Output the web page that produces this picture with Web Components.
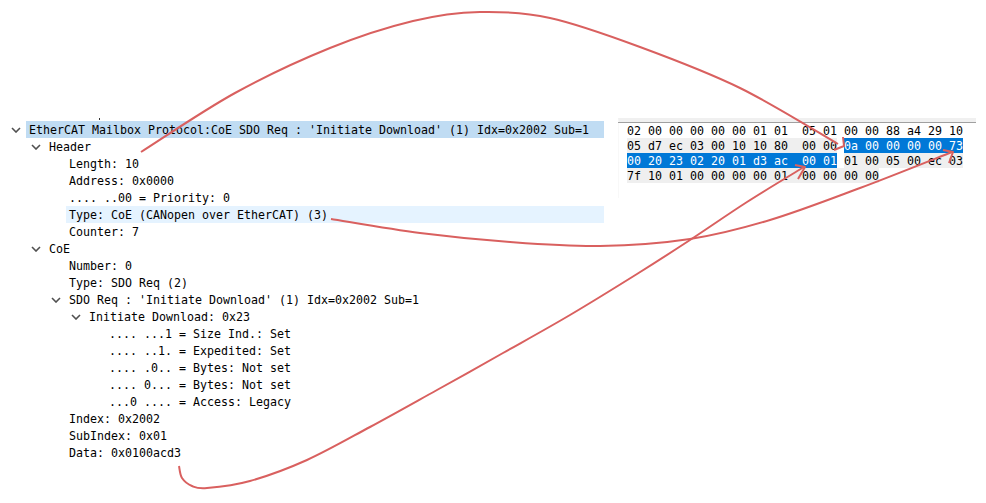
<!DOCTYPE html>
<html>
<head>
<meta charset="utf-8">
<title>EtherCAT Mailbox</title>
<style>
  html, body { margin: 0; background: #fff; }
  body {
    width: 986px;
    height: 503px;
    overflow: hidden;
    font: 11.63px "DejaVu Sans Mono", "Liberation Mono", monospace;
    color: #000;
  }
</style>
</head>
<body>
<capture-page>
  <packet-tree slot="tree">
    <tree-row depth="0" open selected>EtherCAT Mailbox Protocol:CoE SDO Req : 'Initiate Download' (1) Idx=0x2002 Sub=1</tree-row>
    <tree-row depth="1" open>Header</tree-row>
    <tree-row depth="2">Length: 10</tree-row>
    <tree-row depth="2">Address: 0x0000</tree-row>
    <tree-row depth="2">.... ..00 = Priority: 0</tree-row>
    <tree-row depth="2" hover>Type: CoE (CANopen over EtherCAT) (3)</tree-row>
    <tree-row depth="2">Counter: 7</tree-row>
    <tree-row depth="1" open>CoE</tree-row>
    <tree-row depth="2">Number: 0</tree-row>
    <tree-row depth="2">Type: SDO Req (2)</tree-row>
    <tree-row depth="2" open>SDO Req : 'Initiate Download' (1) Idx=0x2002 Sub=1</tree-row>
    <tree-row depth="3" open>Initiate Download: 0x23</tree-row>
    <tree-row depth="4">.... ...1 = Size Ind.: Set</tree-row>
    <tree-row depth="4">.... ..1. = Expedited: Set</tree-row>
    <tree-row depth="4">.... .0.. = Bytes: Not set</tree-row>
    <tree-row depth="4">.... 0... = Bytes: Not set</tree-row>
    <tree-row depth="4">...0 .... = Access: Legacy</tree-row>
    <tree-row depth="2">Index: 0x2002</tree-row>
    <tree-row depth="2">SubIndex: 0x01</tree-row>
    <tree-row depth="2">Data: 0x0100acd3</tree-row>
  </packet-tree>
  <hex-pane slot="hex">
    <hex-row>02 00 00 00 00 00 01 01  05 01 00 00 88 a4 29 10</hex-row>
    <hex-row><hex-run kind="alt">05 d7 ec 03 00 10 10 80  00 00</hex-run> <hex-run kind="sel">0a 00 00 00 00 73</hex-run></hex-row>
    <hex-row><hex-run kind="sel">00 20 23 02 20 01 d3 ac  00 01</hex-run> <hex-run kind="alt">01 00 05 00 ec 03</hex-run></hex-row>
    <hex-row><hex-run kind="alt">7f 10 01 00 00 00 00 01  00 00 00 00</hex-run></hex-row>
  </hex-pane>
  <arrow-layer slot="overlay"></arrow-layer>
</capture-page>

<script>
// curves are annotations drawn over the capture, points read off the screenshot
const ARROWS = [
  {
    points: [[141,152],[235,93],[330,48],[413,21],[480,12],[550,18],[640,47],[740,88],[838,144]],
    head: [[843,137],[844,146],[834,150]],
  },
  {
    points: [[331,219],[420,233],[510,242],[600,246],[690,239],[770,220],[860,188],[952,152]],
    head: [[943,150],[953,152],[949,163]],
  },
  {
    points: [[179,466],[182,478],[192,486],[207,488],[250,481],[307,460],[370,427],[437,390],[503,353],[570,315],[637,274],[690,240],[747,202],[804,167]],
    head: [[795,165],[805,167],[798,179]],
  },
]

// catmull-rom through the points, as cubic segments
const smoothPath = pts => {
  let d = `M${pts[0][0]} ${pts[0][1]}`
  for (let i = 0; i < pts.length - 1; i++) {
    const p0 = pts[i - 1] || pts[i]
    const p1 = pts[i]
    const p2 = pts[i + 1]
    const p3 = pts[i + 2] || p2
    const c1 = [p1[0] + (p2[0] - p0[0]) / 6, p1[1] + (p2[1] - p0[1]) / 6]
    const c2 = [p2[0] - (p3[0] - p1[0]) / 6, p2[1] - (p3[1] - p1[1]) / 6]
    d += `C${c1[0].toFixed(1)} ${c1[1].toFixed(1)} ${c2[0].toFixed(1)} ${c2[1].toFixed(1)} ${p2[0]} ${p2[1]}`
  }
  return d
}

const define = (name, html, extend = () => {}) => {
  class El extends HTMLElement {
    constructor() {
      super()
      // whitespace between tags would show up in the white-space: pre hosts
      this.attachShadow({ mode: 'open' }).innerHTML = html.trim().replace(/>\s+</g, '><')
    }
    connectedCallback() {
      extend(this)
    }
  }
  customElements.define(name, El)
}

define('capture-page', `
  <style>
    :host { display: block; position: relative; width: 986px; height: 503px; }
    .panes { display: flex; gap: 14px; align-items: flex-start; padding-top: 118px; }
  </style>
  <div class="panes">
    <slot name="tree"></slot>
    <slot name="hex"></slot>
  </div>
  <slot name="overlay"></slot>
`)

define('packet-tree', `
  <style>
    :host { display: block; width: 604px; }
    .dot { display: block; width: 1px; height: 2px; margin-left: 99px; background: #333; }
    .rows { display: block; margin-top: 1px; }
  </style>
  <span class="dot"></span>
  <slot class="rows"></slot>
`)

define('tree-row', `
  <style>
    :host { display: flex; height: 17px; line-height: 19px; white-space: pre; }
    .arrow { flex: none; width: 20px; display: flex; align-items: center; justify-content: center; }
    .arrow svg { display: none; }
    :host([open]) .arrow svg { display: block; }
    .label { flex: 1; padding-left: 3px; }
    :host([selected]) .label { background: #c0dcf3; }
    :host([hover]) .label { background: #e5f3ff; }
  </style>
  <span class="arrow">
    <svg width="10" height="6" viewBox="0 0 10 6"><path d="M1 1l4 4 4-4" fill="none" stroke="#505050" stroke-width="1.6"/></svg>
  </span>
  <span class="label"><slot></slot></span>
`, el => {
  el.style.marginLeft = `${6 + Number(el.getAttribute('depth')) * 20}px`
})

define('hex-pane', `
  <style>
    :host {
      display: block;
      width: 358px;
      height: 80px;
      box-sizing: border-box;
      border-top: 4px solid #f0f0f0;
      border-left: 1px solid #f8f8f8;
    }
    .body { border-top: 1px solid #a0a0a0; margin-left: -1px; padding: 0 0 0 9px; }
  </style>
  <div class="body"><slot></slot></div>
`)

define('hex-row', `
  <style>
    :host { display: block; height: 15px; line-height: 17px; white-space: pre; }
  </style>
  <slot></slot>
`)

define('hex-run', `
  <style>
    :host { display: inline-block; height: 15px; }
    :host([kind="alt"]) { background: #efefef; }
    :host([kind="sel"]) { background: #0078d7; color: #fff; }
  </style>
  <slot></slot>
`)

define('arrow-layer', `
  <style>
    :host { display: block; position: absolute; inset: 0; pointer-events: none; }
    svg { display: block; }
    path, polyline { fill: none; stroke: #d9605f; stroke-width: 2; stroke-linejoin: round; }
  </style>
  <svg width="986" height="503" viewBox="0 0 986 503"></svg>
`, el => {
  el.shadowRoot.querySelector('svg').innerHTML = ARROWS.map(({ points, head }) => `
    <path d="${smoothPath(points)}"/>
    <polyline points="${head.map(p => p.join(',')).join(' ')}"/>
  `).join('')
})
</script>
</body>
</html>
